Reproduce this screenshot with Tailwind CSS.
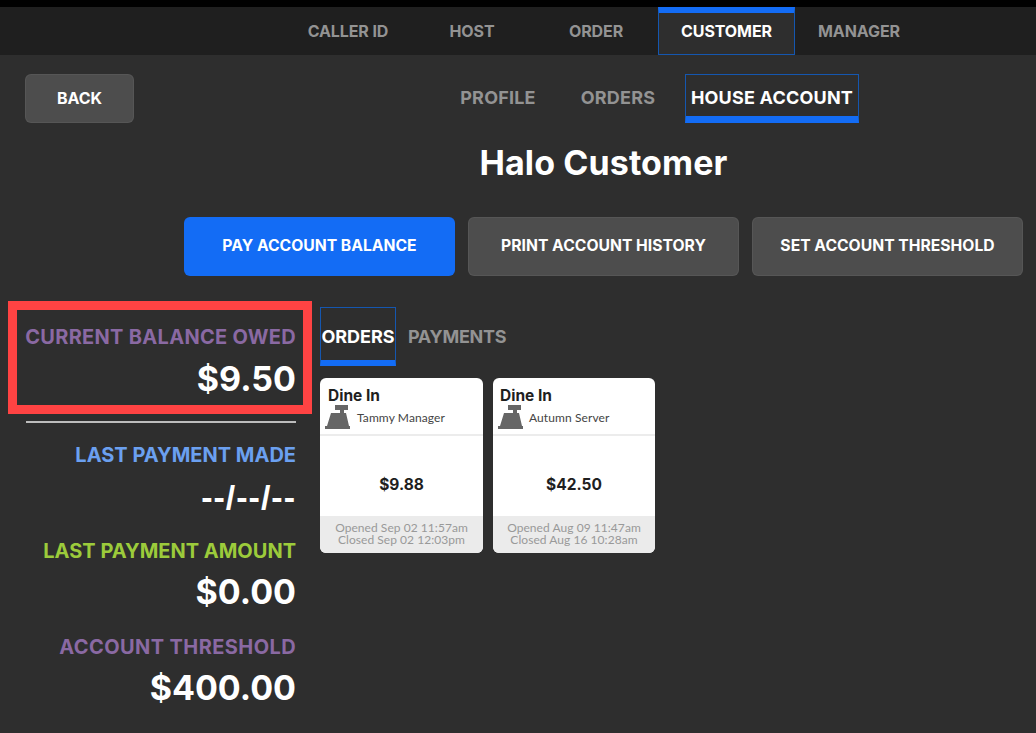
<!DOCTYPE html>
<html lang="en">
<head>
  <meta charset="UTF-8" />
  <meta name="viewport" content="width=device-width, initial-scale=1.0" />
  <title>House Account</title>
  <script src="https://cdn.jsdelivr.net/npm/@tailwindcss/browser@4"></script>
</head>
<body class="bg-[#2e2e2e] text-white font-['Inter','Liberation_Sans',sans-serif] font-bold w-[1036px] h-[733px] overflow-hidden">
  <div class="h-[7px] bg-black"></div>

  <!-- Top nav -->
  <nav class="h-[48px] bg-[#1f1f1f] flex pl-[286px] text-[16px] tracking-[-0.1px] text-[#939393]">
    <div class="w-[124px] flex items-center justify-center">CALLER ID</div>
    <div class="w-[124px] flex items-center justify-center">HOST</div>
    <div class="w-[124px] flex items-center justify-center">ORDER</div>
    <div class="w-[137px] h-[48px] flex items-center justify-center bg-[#2e2e2e] text-white border border-[#1557b0] border-t-[6px] border-t-[#136cf5] pb-[5px]">CUSTOMER</div>
    <div class="w-[128px] flex items-center justify-center">MANAGER</div>
  </nav>

  <!-- Sub nav -->
  <div class="h-[68px] pt-[19px] pl-[25px] flex text-[18px] tracking-[0.2px] text-[#939393]">
    <button class="w-[109px] h-[49px] rounded-[6px] bg-[#4d4d4d] border border-white/5 text-white text-[16px] tracking-normal font-bold pb-[2px]">BACK</button>
    <div class="w-[120px] ml-[304px] h-[49px] flex items-center justify-center pb-[2px]">PROFILE</div>
    <div class="w-[120px] h-[49px] flex items-center justify-center pb-[2px]">ORDERS</div>
    <div class="w-[174px] ml-[7px] h-[49px] flex items-center justify-center text-white border border-[#1557b0] border-b-[7px] border-b-[#136cf5] pt-[4px]">HOUSE ACCOUNT</div>
  </div>

  <h1 class="text-center text-[34px] tracking-[0.1px] leading-[40px] mt-[20px] pl-[171px]">Halo Customer</h1>

  <!-- Actions -->
  <div class="flex gap-[13px] pl-[184px] mt-[34px] text-[15.7px]">
    <button class="w-[271px] h-[59px] rounded-[6px] bg-[#136cf5] font-bold pb-[1px]">PAY ACCOUNT BALANCE</button>
    <button class="w-[271px] h-[59px] rounded-[6px] bg-[#4d4d4d] border border-white/5 font-bold pb-[1px]">PRINT ACCOUNT HISTORY</button>
    <button class="w-[271px] h-[59px] rounded-[6px] bg-[#4d4d4d] border border-white/5 font-bold pb-[1px]">SET ACCOUNT THRESHOLD</button>
  </div>

  <div class="flex mt-[25px]">
    <!-- Balance column -->
    <div class="w-[320px] shrink-0 pl-[8px] text-right">
      <div class="w-[304px] h-[113px] border-[9px] border-[#ff4343] pr-[7px] pt-[13px]">
        <div class="text-[20px] tracking-[0.3px] leading-[28px] text-[#8a69a3]">CURRENT BALANCE OWED</div>
        <div class="text-[34px] leading-[44px] mt-[6px]">$9.50</div>
      </div>
      <div class="w-[270px] ml-[18px] h-[2px] mt-[7px] bg-[#bdbdbd]"></div>
      <div class="pr-[24px]">
        <div class="text-[20px] leading-[28px] mt-[18px] text-[#6ba0f0]">LAST PAYMENT MADE</div>
        <div class="text-[34px] leading-[44px] mt-[6px] tracking-[1px] font-['Liberation_Sans']">--/--/--</div>
        <div class="text-[20px] leading-[28px] mt-[18px] text-[#9ccb3b]">LAST PAYMENT AMOUNT</div>
        <div class="text-[34px] leading-[44px] mt-[5px]">$0.00</div>
        <div class="text-[20px] leading-[28px] tracking-[0.4px] mt-[19px] text-[#8a69a3]">ACCOUNT THRESHOLD</div>
        <div class="text-[34px] leading-[44px] mt-[5px]">$400.00</div>
      </div>
    </div>

    <!-- Orders -->
    <div>
      <div class="flex h-[59px] mt-[6px] text-[18px] text-[#939393]">
        <div class="w-[76px] flex items-center justify-center text-white border border-[#1557b0] border-b-[6px] border-b-[#136cf5] pt-[4px]">ORDERS</div>
        <div class="ml-[12px] flex items-center tracking-[-0.3px]">PAYMENTS</div>
      </div>
      <div class="flex gap-[10px] mt-[12px]">
        <div class="w-[163px] h-[175px] rounded-[6px] bg-white overflow-hidden flex flex-col text-[#1f1f1f]">
          <div class="h-[58px] border-b-[2px] border-[#ececec] pl-[8px] pt-[8px]">
            <div class="text-[15.500px] leading-[20px]">Dine In</div>
            <div class="flex items-center -ml-[3px] -mt-[1px]">
              <svg class="w-[25px] h-[25px] shrink-0" viewBox="0 0 25 25" fill="#666"><path d="M10 0h13v5h-4v3h2l3 13h1v3H0v-3h2L6 8h9V5h-5z"/></svg>
              <span class="ml-[7px] text-[12px] tracking-[0.1px] font-normal font-['Lato'] text-[#444]">Tammy Manager</span>
            </div>
          </div>
          <div class="flex-1 flex items-center justify-center text-[15.500px] pt-[18px]">$9.88</div>
          <div class="h-[37px] bg-[#ebebeb] text-center text-[12px] leading-[12px] pt-[6px] tracking-[0.05px] font-normal font-['Lato'] text-[#999] whitespace-pre-line">Opened Sep 02 11:57am
Closed Sep 02 12:03pm</div>
        </div>
        <div class="w-[162px] h-[175px] rounded-[6px] bg-white overflow-hidden flex flex-col text-[#1f1f1f]">
          <div class="h-[58px] border-b-[2px] border-[#ececec] pl-[7px] pt-[8px]">
            <div class="text-[15.500px] leading-[20px]">Dine In</div>
            <div class="flex items-center -ml-[2px] -mt-[1px]">
              <svg class="w-[25px] h-[25px] shrink-0" viewBox="0 0 25 25" fill="#666"><path d="M10 0h13v5h-4v3h2l3 13h1v3H0v-3h2L6 8h9V5h-5z"/></svg>
              <span class="ml-[6px] text-[12px] tracking-[0.1px] font-normal font-['Lato'] text-[#444]">Autumn Server</span>
            </div>
          </div>
          <div class="flex-1 flex items-center justify-center text-[15.500px] pt-[18px]">$42.50</div>
          <div class="h-[37px] bg-[#ebebeb] text-center text-[12px] leading-[12px] pt-[6px] tracking-[0.05px] font-normal font-['Lato'] text-[#999] whitespace-pre-line">Opened Aug 09 11:47am
Closed Aug 16 10:28am</div>
        </div>
      </div>
    </div>
  </div>
</body>
</html>
